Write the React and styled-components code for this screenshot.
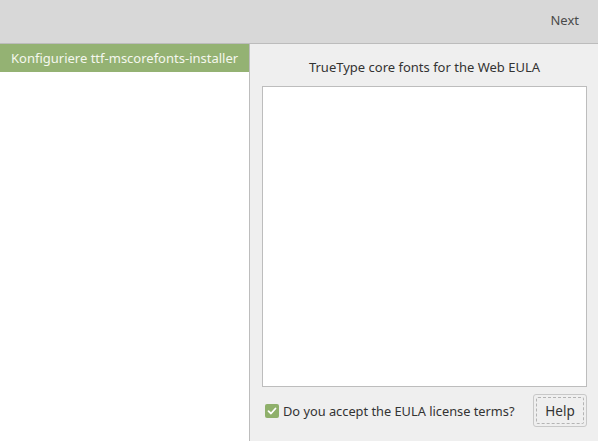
import React, { useState } from 'react'
import styled, { createGlobalStyle } from 'styled-components'

const GlobalStyle = createGlobalStyle`
  html, body {
    margin: 0;
    padding: 0;
    height: 100%;
    background: #efefef;
  }
  #root {
    height: 100%;
  }
  * {
    box-sizing: border-box;
  }
`

const Window = styled.div`
  width: 598px;
  height: 441px;
  display: flex;
  flex-direction: column;
  font-family: "Noto Sans", "DejaVu Sans", sans-serif;
  font-size: 12.5px;
  color: #3c3c3c;
  overflow: hidden;
`

const HeaderBar = styled.div`
  height: 44px;
  flex: none;
  background: #d8d8d8;
  border-bottom: 1px solid #bcbcbc;
  display: flex;
  align-items: center;
  justify-content: flex-end;
  padding: 0 19px 3px 0;
`

const NextButton = styled.span`
  color: #4a4a4a;
  font-size: 13px;
`

const Body = styled.div`
  flex: 1;
  display: flex;
  min-height: 0;
`

const Sidebar = styled.div`
  width: 250px;
  flex: none;
  background: #ffffff;
  border-right: 1px solid #bdbdbd;
`

const SideItem = styled.div`
  height: 28px;
  display: flex;
  align-items: center;
  padding-left: 11px;
  font-size: 13px;
  color: ${p => (p.selected ? '#f4f7ee' : '#3c3c3c')};
  background: ${p => (p.selected ? '#94b273' : 'transparent')};
  white-space: nowrap;
`

const Content = styled.div`
  flex: 1;
  display: flex;
  flex-direction: column;
  padding: 0 11px 14px 12px;
`

const Title = styled.div`
  height: 42px;
  display: flex;
  align-items: center;
  justify-content: center;
  font-size: 13px;
  color: #333;
  padding-top: 3px;
`

const LicenseBox = styled.div`
  flex: 1;
  background: #ffffff;
  border: 1px solid #bdbdbd;
`

const Footer = styled.div`
  display: flex;
  align-items: center;
  justify-content: space-between;
  margin-top: 7px;
  padding-left: 3px;
`

const CheckLabel = styled.label`
  display: flex;
  align-items: center;
  gap: 4px;
  font-size: 12.8px;
  color: #333;
  cursor: pointer;
`

const CheckBox = styled.span`
  width: 14px;
  height: 14px;
  border-radius: 2px;
  background: ${p => (p.checked ? '#8fb06b' : '#fff')};
  display: inline-flex;
  align-items: center;
  justify-content: center;
`

const HelpButton = styled.button`
  width: 54px;
  height: 33px;
  background: #efefef;
  border: 1px solid #c8c8c8;
  border-radius: 3px;
  font-family: inherit;
  font-size: 13.5px;
  color: #333;
  position: relative;
  padding: 0;
  &::after {
    content: '';
    position: absolute;
    inset: 2px;
    border: 1px dashed #b4b4b4;
    border-radius: 2px;
  }
`

export default function App() {
  const [accepted, setAccepted] = useState(true)
  return (
    <>
      <GlobalStyle />
      <Window>
        <HeaderBar>
          <NextButton>Next</NextButton>
        </HeaderBar>
        <Body>
          <Sidebar>
            <SideItem selected>Konfiguriere ttf-mscorefonts-installer</SideItem>
          </Sidebar>
          <Content>
            <Title>TrueType core fonts for the Web EULA</Title>
            <LicenseBox />
            <Footer>
              <CheckLabel onClick={() => setAccepted(!accepted)}>
                <CheckBox checked={accepted}>
                  {accepted && (
                    <svg width="10" height="10" viewBox="0 0 10 10">
                      <path d="M1.5 5.2 L4 7.5 L8.5 2.5" fill="none" stroke="#fff" strokeWidth="1.8" strokeLinecap="round" strokeLinejoin="round" />
                    </svg>
                  )}
                </CheckBox>
                Do you accept the EULA license terms?
              </CheckLabel>
              <HelpButton>Help</HelpButton>
            </Footer>
          </Content>
        </Body>
      </Window>
    </>
  )
}
